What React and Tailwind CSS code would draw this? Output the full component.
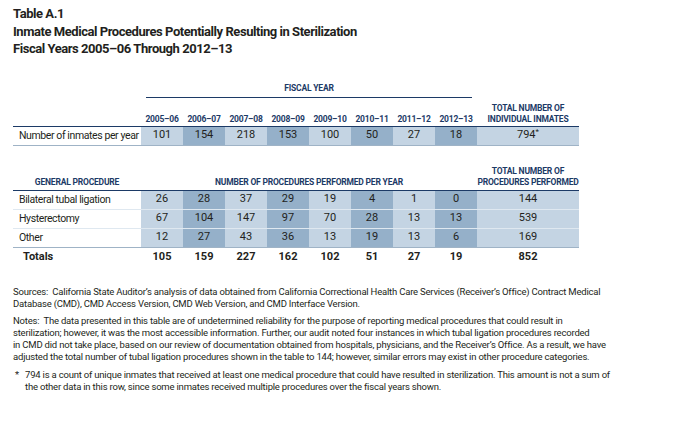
import React from "react";

const years = ["2005–06", "2006–07", "2007–08", "2008–09", "2009–10", "2010–11", "2011–12", "2012–13"];
const inmates = ["101", "154", "218", "153", "100", "50", "27", "18"];
const procs = [
  { label: "Bilateral tubal ligation", vals: ["26", "28", "37", "29", "19", "4", "1", "0"], total: "144" },
  { label: "Hysterectomy", vals: ["67", "104", "147", "97", "70", "28", "13", "13"], total: "539" },
  { label: "Other", vals: ["12", "27", "43", "36", "13", "19", "13", "6"], total: "169" },
];
const totals = ["105", "159", "227", "162", "102", "51", "27", "19"];

const grid = "grid grid-cols-[128px_repeat(8,42px)_102px]";
const hdr = "text-[8.5px] font-bold text-[#1c3a66] leading-[11px] tracking-[-0.2px] whitespace-nowrap";

function DataRow({ label, vals, total, last }) {
  return (
    <div className={`${grid} h-[19px] items-stretch ${last ? "border-b border-[#9fb3c6]" : "border-b border-[#dfe8f0]"}`}>
      <div className="pl-[6px] flex items-center text-[10.5px] tracking-[-0.4px] text-[#231f20] whitespace-nowrap bg-white">{label}</div>
      {vals.map((v, i) => (
        <div
          key={i}
          className={`flex items-center justify-center text-[11px] text-[#231f20] ${i % 2 === 0 ? "bg-[#c4d4e3]" : "bg-[#95b0c9]"}`}
        >
          {v}
        </div>
      ))}
      <div className="flex items-center justify-center text-[11px] text-[#231f20] bg-[#c4d4e3]">{total}</div>
    </div>
  );
}

export default function App() {
  return (
    <div className="w-[690px] h-[432px] bg-white overflow-hidden font-['Roboto',sans-serif] text-[#231f20]">
      <div className="pl-[13px] pt-[5px]">
        <div className="text-[13px] font-bold leading-[17.5px] tracking-[-0.45px]">Table A.1</div>
        <div className="text-[13px] font-bold leading-[17.5px] tracking-[-0.45px]">Inmate Medical Procedures Potentially Resulting in Sterilization</div>
        <div className="text-[13px] font-bold leading-[17.5px] tracking-[-0.45px]">Fiscal Years 2005–06 Through 2012–13</div>

        {/* Top table */}
        <div className="mt-[25px] w-[566px]">
          <div className={grid}>
            <div />
            <div className="col-span-8 px-[5px]">
              <div className={`${hdr} text-center pb-[3px] border-b border-[#1c3a66]`}>FISCAL YEAR</div>
            </div>
            <div />
          </div>
          <div className={`${grid} items-end h-[29px] pb-[1px] border-b border-[#1c3a66]`}>
            <div />
            {years.map((y) => (
              <div key={y} className={`${hdr} text-center`}>{y}</div>
            ))}
            <div className={`${hdr} text-center`}>
              TOTAL NUMBER OF
              <br />
              INDIVIDUAL INMATES
            </div>
          </div>
          <DataRow label="Number of inmates per year" vals={inmates} total={<span>794<sup className="text-[8px]">*</sup></span>} last />
        </div>

        {/* Bottom table */}
        <div className="mt-[18px] w-[566px]">
          <div className={`${grid} items-end h-[27px] pb-[2px] border-b border-[#1c3a66]`}>
            <div className={`${hdr} text-center`}>GENERAL PROCEDURE</div>
            <div className={`${hdr} col-span-8 text-center`}>NUMBER OF PROCEDURES PERFORMED PER YEAR</div>
            <div className={`${hdr} text-center`}>
              TOTAL NUMBER OF
              <br />
              PROCEDURES PERFORMED
            </div>
          </div>
          {procs.map((p, i) => (
            <DataRow key={p.label} {...p} last={i === procs.length - 1} />
          ))}
          <div className={`${grid} h-[20px] items-center`}>
            <div className="pl-[10px] text-[11px] font-bold">Totals</div>
            {totals.map((t, i) => (
              <div key={i} className="text-center text-[11px] font-bold">{t}</div>
            ))}
            <div className="text-center text-[11px] font-bold">852</div>
          </div>
        </div>

        {/* Notes */}
        <div className="mt-[18px] text-[9.5px] leading-[12px] tracking-[-0.2px] whitespace-nowrap">
          <div>Sources:&nbsp; California State Auditor’s analysis of data obtained from California Correctional Health Care Services (Receiver’s Office) Contract Medical</div>
          <div>Database (CMD), CMD Access Version, CMD Web Version, and CMD Interface Version.</div>
          <div className="mt-[5px]">Notes:&nbsp; The data presented in this table are of undetermined reliability for the purpose of reporting medical procedures that could result in</div>
          <div>sterilization; however, it was the most accessible information. Further, our audit noted four instances in which tubal ligation procedures recorded</div>
          <div>in CMD did not take place, based on our review of documentation obtained from hospitals, physicians, and the Receiver’s Office. As a result, we have</div>
          <div>adjusted the total number of tubal ligation procedures shown in the table to 144; however, similar errors may exist in other procedure categories.</div>
          <div className="mt-[6px] flex">
            <div className="w-[12px] pl-[2px]">*</div>
            <div>
              <div>794 is a count of unique inmates that received at least one medical procedure that could have resulted in sterilization. This amount is not a sum of</div>
              <div>the other data in this row, since some inmates received multiple procedures over the fiscal years shown.</div>
            </div>
          </div>
        </div>
      </div>
    </div>
  );
}
